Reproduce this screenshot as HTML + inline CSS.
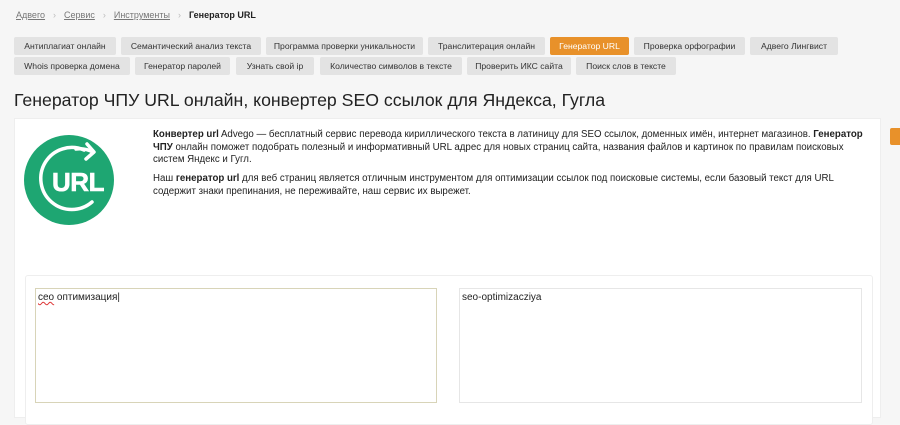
<!DOCTYPE html>
<html><head><meta charset="utf-8"><style>
*{margin:0;padding:0;box-sizing:border-box}
body{width:900px;height:414px;overflow:hidden;background:#f6f6f6;font-family:"Liberation Sans",sans-serif;color:#222;position:relative}
.a{position:absolute}
.bc{top:10px;left:16px;font-size:9px;color:#555;white-space:nowrap}
.bc span.l{text-decoration:underline;color:#777}
.bc .s{color:#bbb;margin:0 8px}
.tab{position:absolute;height:18px;background:#e3e3e3;border-radius:2px;font-size:8.6px;line-height:18px;text-align:center;color:#333;white-space:nowrap;overflow:hidden}
.tab.on{background:#e8912a;color:#fff}
h1{position:absolute;left:14px;top:90px;font-size:17.7px;font-weight:normal;color:#222;white-space:nowrap}
.panel{left:14px;top:118px;width:867px;height:300px;background:#fff;border:1px solid #eee}
.txt{left:153px;font-size:9.7px;line-height:12.5px;white-space:nowrap;color:#222}
.inner{left:25px;top:275px;width:848px;height:150px;border:1px solid #eee;border-radius:3px;background:#fff}
.ta{position:absolute;top:288px;height:115px;background:#fff;font-size:10px;padding:3px 2px}
</style></head><body>
<div class="a bc"><span class="l">Адвего</span><span class="s">›</span><span class="l">Сервис</span><span class="s">›</span><span class="l">Инструменты</span><span class="s">›</span><b style="color:#222">Генератор URL</b></div>
<div class="tab" style="left:14px;top:37px;width:102px">Антиплагиат онлайн</div>
<div class="tab" style="left:121px;top:37px;width:140px">Семантический анализ текста</div>
<div class="tab" style="left:266px;top:37px;width:157px">Программа проверки уникальности</div>
<div class="tab" style="left:428px;top:37px;width:117px">Транслитерация онлайн</div>
<div class="tab on" style="left:550px;top:37px;width:79px">Генератор URL</div>
<div class="tab" style="left:634px;top:37px;width:111px">Проверка орфографии</div>
<div class="tab" style="left:750px;top:37px;width:88px">Адвего Лингвист</div>
<div class="tab" style="left:14px;top:57px;width:116px">Whois проверка домена</div>
<div class="tab" style="left:135px;top:57px;width:95px">Генератор паролей</div>
<div class="tab" style="left:236px;top:57px;width:78px">Узнать свой ip</div>
<div class="tab" style="left:320px;top:57px;width:142px">Количество символов в тексте</div>
<div class="tab" style="left:467px;top:57px;width:104px">Проверить ИКС сайта</div>
<div class="tab" style="left:576px;top:57px;width:100px">Поиск слов в тексте</div>
<h1>Генератор ЧПУ URL онлайн, конвертер SEO ссылок для Яндекса, Гугла</h1>
<div class="a panel"></div>
<div class="a" style="left:890px;top:128px;width:10px;height:17px;background:#e8912a;border-radius:2px 0 0 2px"></div>
<svg class="a" style="left:24px;top:135px" width="90" height="90" viewBox="0 0 90 90">
<circle cx="45" cy="45" r="45" fill="#1ea672"/>
<path d="M60 15 A31 31 0 1 0 68 67" fill="none" stroke="#fff" stroke-width="3.5" stroke-linecap="round"/>
<path d="M52 14 Q61 13 69 17" fill="none" stroke="#fff" stroke-width="3.5" stroke-linecap="round"/>
<path d="M63 9 L70 17 L62 24" fill="none" stroke="#fff" stroke-width="3.5" stroke-linecap="round" stroke-linejoin="round"/>
<text x="54" y="56" font-family="Liberation Sans,sans-serif" font-weight="bold" font-size="26" letter-spacing="-0.5" fill="#fff" stroke="#fff" stroke-width="0.6" text-anchor="middle">URL</text>
</svg>
<div class="a txt" style="top:129px"><b>Конвертер url</b> Advego — бесплатный сервис перевода кириллического текста в латиницу для SEO ссылок, доменных имён, интернет магазинов. <b>Генератор</b><br><b>ЧПУ</b> онлайн поможет подобрать полезный и информативный URL адрес для новых страниц сайта, названия файлов и картинок по правилам поисковых<br>систем Яндекс и Гугл.</div>
<div class="a txt" style="top:173px">Наш <b>генератор url</b> для веб страниц является отличным инструментом для оптимизации ссылок под поисковые системы, если базовый текст для URL<br>содержит знаки препинания, не переживайте, наш сервис их вырежет.</div>
<div class="a inner"></div>
<div class="ta" style="left:35px;width:402px;border:1px solid #d8d4b8"><span style="text-decoration:underline wavy #d33">сео</span> оптимизация|</div>
<div class="ta" style="left:459px;width:403px;border:1px solid #e6e6e6">seo-optimizacziya</div>
</body></html>
